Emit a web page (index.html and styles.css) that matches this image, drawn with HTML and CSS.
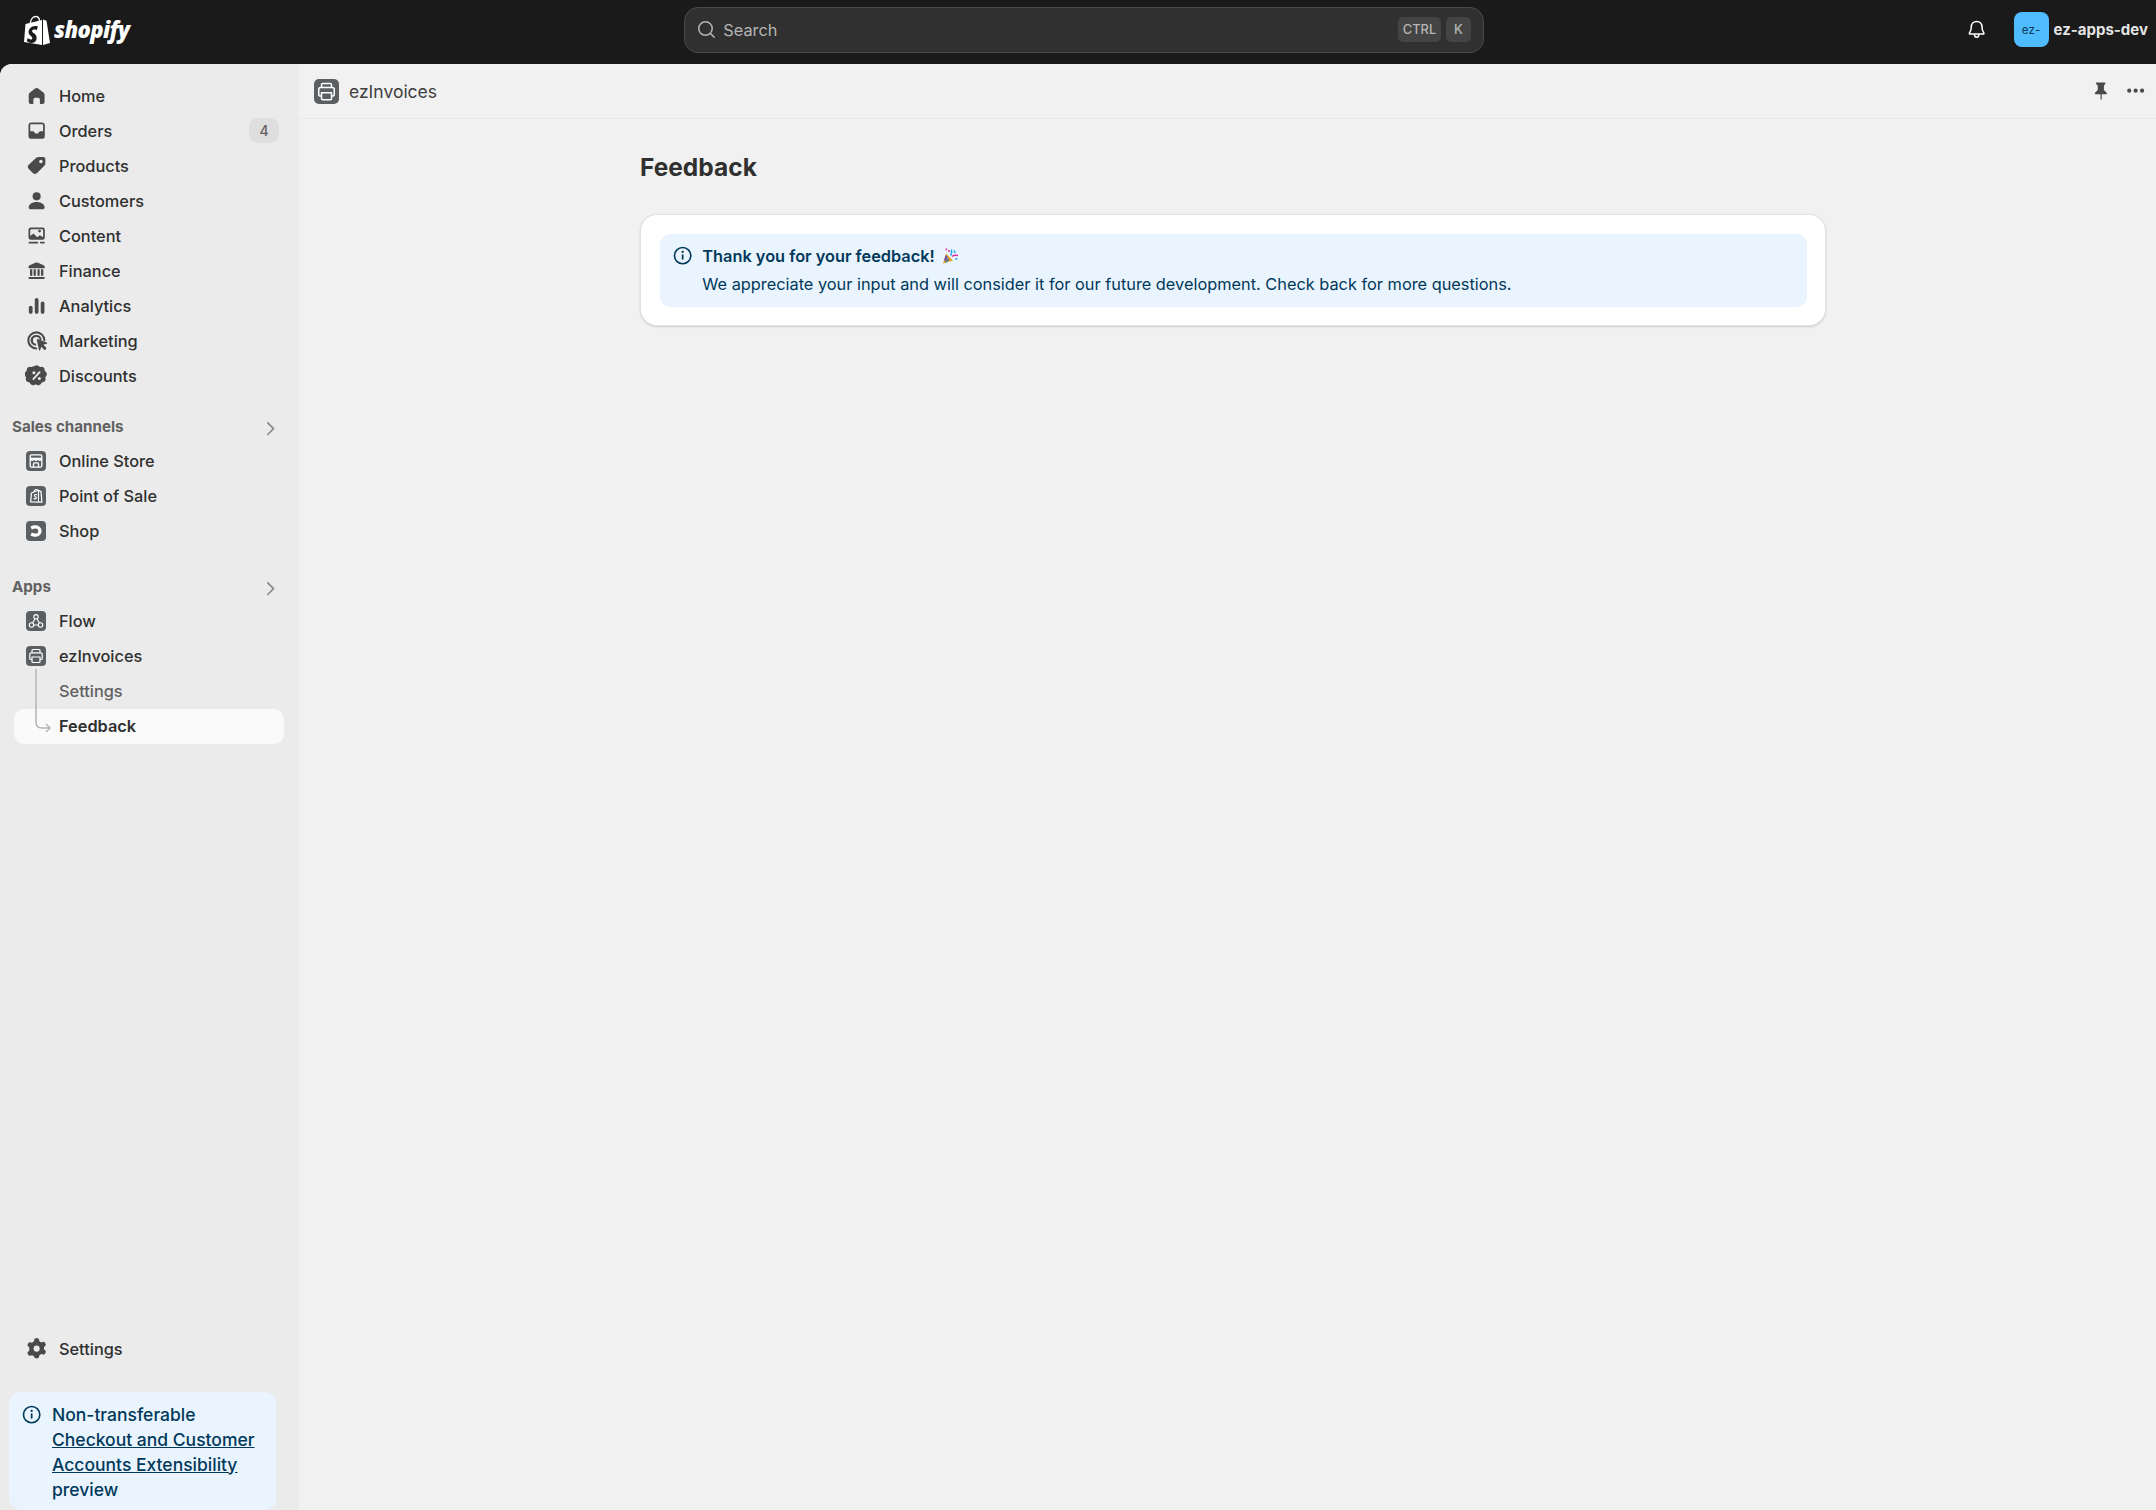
FILE: index.html

```html
<!DOCTYPE html>
<html lang="en">
<head>
  <meta charset="UTF-8" />
  <title>Feedback ~ ezInvoices ~ Shopify</title>
  <link rel="stylesheet" href="styles.css">
</head>
<body>
  <svg class="sprite" xmlns="http://www.w3.org/2000/svg">
    <symbol id="i-home" viewBox="0 0 20 20"><path d="M3.200 9.300c0-.7.300-1.300.8-1.800l4.400-3.500a2.500 2.500 0 0 1 3.200 0l4.400 3.500c.5.500.8 1.100.8 1.800v6.100a1.800 1.800 0 0 1-1.800 1.800H12.800v-3.700a1.800 1.800 0 0 0-1.800-1.800H9a1.800 1.800 0 0 0-1.800 1.800v3.700H5a1.800 1.800 0 0 1-1.800-1.800z"/></symbol>
    <symbol id="i-orders" viewBox="0 0 20 20"><path d="M5.500 3h9A2.500 2.500 0 0 1 17 5.500v9a2.500 2.500 0 0 1-2.500 2.500h-9A2.500 2.500 0 0 1 3 14.500v-9A2.500 2.500 0 0 1 5.500 3z"/><path d="M4.500 5.300c0-.5.400-.8.800-.8h9.400c.4 0 .8.300.8.800v5.200h-2.300c-.6 0-1 .3-1.300.8l-.4.700c-.2.300-.5.500-.9.500H9.400c-.4 0-.7-.2-.9-.5l-.4-.7c-.3-.5-.7-.8-1.300-.8H4.500z" fill="#ebebeb"/></symbol>
    <symbol id="i-tag" viewBox="1 1 18 18"><path fill-rule="evenodd" d="M11.700 3.300h3.400c.9 0 1.600.7 1.600 1.600v3.400c0 .7-.3 1.300-.8 1.800l-5.600 5.600a2.300 2.300 0 0 1-3.200 0l-3.200-3.200a2.300 2.300 0 0 1 0-3.200L9.500 4c.6-.5 1.400-.7 2.200-.7zM13.300 8.200a1.400 1.400 0 1 0 0-2.800 1.400 1.400 0 0 0 0 2.800z"/></symbol>
    <symbol id="i-person" viewBox="0.500 0.500 19 19"><circle cx="10" cy="6.500" r="3.300"/><path d="M10 11.200c3.400 0 6.500 1.800 6.500 4.300 0 .9-.7 1.500-1.600 1.500H5.100c-.9 0-1.600-.6-1.600-1.500 0-2.500 3.100-4.300 6.500-4.300z"/></symbol>
    <symbol id="i-content" viewBox="0 0 20 20"><path fill-rule="evenodd" d="M5 3h10a2 2 0 0 1 2 2v6.500a2 2 0 0 1-2 2H5a2 2 0 0 1-2-2V5a2 2 0 0 1 2-2zM4.500 10.300l2.700-2.200 3.300 3.200 2.300-1.600 2.700 1.600V5.300c0-.5-.3-.8-.8-.8H5.300c-.5 0-.8.300-.8.800zm8-3a1.200 1.200 0 1 0 0-2.400 1.200 1.200 0 0 0 0 2.400z"/><rect x="3" y="15.300" width="8.400" height="1.500" rx=".7"/><rect x="12.800" y="15.300" width="4.200" height="1.500" rx=".7"/></symbol>
    <symbol id="i-bank" viewBox="0 0 20 20"><path d="M8.800 3.200a2.700 2.700 0 0 1 2.400 0l4.800 2.200c.6.300 1 .8 1 1.400v.4c0 .4-.3.700-.7.700H3.700c-.4 0-.7-.3-.7-.7v-.4c0-.6.400-1.100 1-1.400zM4.300 8.800h2v5.500h-2zM7.400 8.800h1.900v5.500H7.400zM10.700 8.800h1.900v5.500h-1.900zM13.700 8.800h2v5.500h-2zM3.700 15.400h12.600c.4 0 .7.300.7.700v.3c0 .4-.3.700-.7.700H3.700c-.4 0-.7-.3-.7-.7v-.3c0-.4.300-.7.700-.7z"/></symbol>
    <symbol id="i-chart" viewBox="0 0 20 20"><rect x="3.300" y="10" width="3.200" height="7" rx="1.600"/><rect x="8.400" y="3.500" width="3.200" height="13.500" rx="1.600"/><rect x="13.500" y="6.500" width="3.200" height="10.500" rx="1.600"/></symbol>
    <symbol id="i-target" viewBox="1.200 1.200 18 18"><path d="M10 3a7 7 0 0 1 7 6.800.8.800 0 0 1-1.600 0A5.400 5.400 0 1 0 9.900 15.400a.8.800 0 0 1 0 1.600A7 7 0 0 1 10 3z"/><path d="M10 5.900a4.100 4.100 0 0 1 4 3.400.8.800 0 0 1-1.500.3 2.600 2.600 0 1 0-3 3 .8.800 0 0 1-.3 1.500 4.100 4.100 0 0 1 .8-8.200z"/><path d="M10.300 9.500c-.1-.4.300-.8.700-.6l7 2.700c.4.200.4.800 0 .9l-2.600.9 2.200 2.200c.2.300.2.600 0 .8l-.8.800c-.2.200-.6.200-.8 0l-2.200-2.200-.9 2.600c-.1.400-.7.400-.9 0z"/></symbol>
    <symbol id="i-discount" viewBox="1.500 1.500 17 17"><path fill-rule="evenodd" d="M8.500 3c.9-.7 2.100-.7 3 0l.9.7 1.100-.1c1.100-.1 2.100.7 2.300 1.800l.1 1.100.9.800c.8.800.9 2 .2 2.900l-.7.900.2 1.100c.2 1.100-.5 2.200-1.600 2.500l-1.100.3-.6 1c-.6 1-1.800 1.300-2.900.8l-1-.5-1 .5c-1.100.5-2.300.2-2.900-.8l-.6-1-1.100-.3c-1.100-.3-1.800-1.400-1.600-2.500l.2-1.100-.7-.9c-.7-.9-.6-2.100.2-2.900l.9-.8.1-1.100c.2-1.100 1.200-1.900 2.300-1.800l1.100.1zM12.600 7a.7.700 0 0 0-1 0l-4.500 5a.7.700 0 0 0 1.100.9l4.500-5c.200-.3.200-.7-.1-.9zM8 9a1.100 1.100 0 1 0 0-2.200A1.100 1.100 0 0 0 8 9zm4 4.200a1.100 1.100 0 1 0 0-2.200 1.100 1.100 0 0 0 0 2.200z"/></symbol>
    <symbol id="i-gear" viewBox="1.600 1.600 16.800 16.800"><path fill-rule="evenodd" d="M8.400 3.200c.1-.4.500-.7 1-.7h1.200c.5 0 .9.300 1 .7l.4 1.500 1.300.8 1.500-.4c.4-.1.900.1 1.100.5l.6 1c.2.400.2.900-.1 1.200l-1.100 1.100v1.600l1.100 1.100c.3.300.3.800.1 1.200l-.6 1c-.2.400-.7.600-1.100.5l-1.500-.4-1.300.8-.4 1.500c-.1.400-.5.700-1 .7H9.400c-.5 0-.9-.3-1-.7L8 15.500l-1.300-.8-1.500.4c-.4.100-.9-.1-1.100-.5l-.6-1c-.2-.4-.2-.9.100-1.200l1.100-1.100V9.200L3.600 8.100c-.3-.3-.3-.8-.1-1.200l.6-1c.2-.4.7-.6 1.100-.5l1.500.4L8 4.700zM10 12.200a2.200 2.200 0 1 0 0-4.400 2.200 2.200 0 0 0 0 4.400z"/></symbol>
    <symbol id="i-info" viewBox="0 0 20 20"><circle cx="10" cy="10" r="7" fill="none" stroke="currentColor" stroke-width="1.400"/><circle cx="10" cy="6.700" r="1" fill="currentColor"/><rect x="9.250" y="8.800" width="1.500" height="4.800" rx=".7" fill="currentColor"/></symbol>
    <symbol id="i-chevron" viewBox="0 0 20 20"><path d="M7.500 5l5 5-5 5" fill="none" stroke="currentColor" stroke-width="1.400" stroke-linecap="round" stroke-linejoin="round"/></symbol>
    <symbol id="t-store" viewBox="0 0 20 20"><rect width="20" height="20" rx="4" fill="#5c5f62"/><g fill="none" stroke="#fff" stroke-width="1.300" stroke-linejoin="round"><rect x="4.200" y="3.800" width="11.600" height="12.400" rx="1.500"/><path d="M4.200 8.200c1 1.400 2.800 1.400 3.900 0 1 1.400 2.800 1.400 3.800 0 1.100 1.400 2.900 1.400 3.900 0M4.200 7.500h11.600M7.500 16.200v-3.300c0-.6.400-1 1-1h3c.6 0 1 .4 1 1v3.300"/></g></symbol>
    <symbol id="t-pos" viewBox="0 0 20 20"><rect width="20" height="20" rx="4" fill="#5c5f62"/><path d="M5.400 7l6.900-2.700 2.700 1.300.9 10.600-11.200-.2z" fill="none" stroke="#fff" stroke-width="1.200" stroke-linejoin="round"/><path d="M8 5.800c.3-2.400 3-3.200 4-1.200M12.500 4.500v11.600" fill="none" stroke="#fff" stroke-width="1.100"/><path d="M10.700 8.700c-1.200-.5-2.300 0-2.200 1 .1 1 1.900 1 1.900 2.100 0 1-1.100 1.300-2.300.8" fill="none" stroke="#fff" stroke-width="1.200" stroke-linecap="round"/></symbol>
    <symbol id="t-shop" viewBox="0 0 20 20"><rect width="20" height="20" rx="4" fill="#5c5f62"/><path d="M4.500 5.500c1.500-1 3-1.300 5.300-1.300a5.800 5.800 0 0 1 0 11.600c-2 0-3.800-.5-5.300-1.400l1.300-2.800c1.200.6 2.600 1 3.900 1a2.600 2.600 0 0 0 0-5.200c-1.300 0-2.700.3-3.900 1z" fill="#fff"/></symbol>
    <symbol id="t-flow" viewBox="0 0 20 20"><rect width="20" height="20" rx="4" fill="#5c5f62"/><g fill="none" stroke="#fff" stroke-width="1.100"><circle cx="10" cy="5.800" r="2.200"/><circle cx="5.500" cy="14" r="2.200"/><circle cx="14.500" cy="14" r="2.200"/><path d="M9 8l-2.400 3.900M11 8l2.400 3.900M7.800 14h4.400"/></g></symbol>
    <symbol id="t-printer" viewBox="0 0 20 20"><rect width="20" height="20" rx="4" fill="#5c5f62"/><g fill="none" stroke="#fff" stroke-width="1.200" stroke-linejoin="round"><path d="M6 6.800V4.500c0-.6.400-1 1-1h6c.6 0 1 .4 1 1v2.300"/><path d="M6 13.500H4.800c-.6 0-1-.4-1-1V8.300c0-.8.600-1.500 1.500-1.500h9.400c.9 0 1.500.7 1.500 1.500v4.200c0 .6-.4 1-1 1H14"/><path d="M6 11h8v4.500c0 .6-.4 1-1 1H7c-.6 0-1-.4-1-1z"/></g></symbol>
  </svg>

  <header class="topbar">
    <div class="brand">
      <svg class="brand-bag" viewBox="0 0 26 30"><path d="M1.500 9L18 5v25L0 27z" fill="#fff"/><path d="M19 4.500l3.500 1.300L26 28l-7 2z" fill="#fff"/><path d="M6.300 8c.5-4 3-6.800 5.700-6.500 2.500.2 3.500 2 3.600 5" fill="none" stroke="#fff" stroke-width="1.300"/><path d="M14 11.300l-1.300 3.900s-1.100-.6-2.500-.6c-2 0-2.100 1.300-2.100 1.600 0 1.700 4.500 2.400 4.500 6.500 0 3.200-2 5.200-4.800 5.200-3.300 0-5-2-5-2l.9-2.900s1.700 1.500 3.200 1.500c1 0 1.400-.8 1.400-1.300 0-2.300-3.700-2.400-3.700-6.100 0-3.100 2.300-6.200 6.800-6.200 1.700 0 2.600.5 2.600.5z" fill="#1a1a1a"/></svg>
      <span class="brand-name">shopify</span>
    </div>
    <div class="search">
      <svg class="search-icon" viewBox="0 0 20 20"><circle cx="9" cy="9" r="5.800" fill="none" stroke="currentColor" stroke-width="1.300"/><path d="M13.300 13.300l3.200 3.200" stroke="currentColor" stroke-width="1.300" stroke-linecap="round"/></svg>
      <span class="search-text">Search</span>
      <kbd class="key key-ctrl">CTRL</kbd>
      <kbd class="key key-k">K</kbd>
    </div>
    <div class="account">
      <svg class="bell" viewBox="0 0 20 20"><path d="M10 3c-2.800 0-4.600 2.100-4.600 4.800 0 2.600-.5 3.700-1.500 4.900-.4.500-.1 1.100.5 1.100h11.200c.6 0 .9-.6.500-1.100-1-1.200-1.500-2.300-1.500-4.900C14.600 5.100 12.800 3 10 3z" fill="none" stroke="currentColor" stroke-width="1.300" stroke-linejoin="round"/><path d="M8.200 13.800v.9a1.800 1.800 0 0 0 3.600 0v-.9" fill="none" stroke="currentColor" stroke-width="1.300"/></svg>
      <span class="avatar">ez-</span>
      <span class="store-name">ez-apps-dev</span>
    </div>
  </header>

  <div class="frame">
    <aside class="sidebar">
      <nav class="nav-main">
        <a class="nav-item"><svg class="icon"><use href="#i-home"/></svg>Home</a>
        <a class="nav-item"><svg class="icon"><use href="#i-orders"/></svg>Orders<span class="count">4</span></a>
        <a class="nav-item"><svg class="icon"><use href="#i-tag"/></svg>Products</a>
        <a class="nav-item"><svg class="icon"><use href="#i-person"/></svg>Customers</a>
        <a class="nav-item"><svg class="icon"><use href="#i-content"/></svg>Content</a>
        <a class="nav-item"><svg class="icon"><use href="#i-bank"/></svg>Finance</a>
        <a class="nav-item"><svg class="icon"><use href="#i-chart"/></svg>Analytics</a>
        <a class="nav-item"><svg class="icon"><use href="#i-target"/></svg>Marketing</a>
        <a class="nav-item"><svg class="icon"><use href="#i-discount"/></svg>Discounts</a>
      </nav>

      <div class="nav-section">
        <div class="section-title">Sales channels<svg class="chevron"><use href="#i-chevron"/></svg></div>
        <a class="nav-item"><svg class="tile"><use href="#t-store"/></svg>Online Store</a>
        <a class="nav-item"><svg class="tile"><use href="#t-pos"/></svg>Point of Sale</a>
        <a class="nav-item"><svg class="tile"><use href="#t-shop"/></svg>Shop</a>
      </div>

      <div class="nav-section">
        <div class="section-title">Apps<svg class="chevron"><use href="#i-chevron"/></svg></div>
        <a class="nav-item"><svg class="tile"><use href="#t-flow"/></svg>Flow</a>
        <a class="nav-item"><svg class="tile"><use href="#t-printer"/></svg>ezInvoices</a>
        <div class="subnav">
          <a class="nav-item sub">Settings</a>
          <a class="nav-item sub active">Feedback</a>
          <svg class="connector" viewBox="0 0 16 66"><path d="M1 0v53c0 4 2 6 6 6h8M11 55l4 4-4 4" fill="none" stroke="#b5b5b5" stroke-width="1.500"/></svg>
        </div>
      </div>

      <div class="sidebar-foot">
        <a class="nav-item"><svg class="icon"><use href="#i-gear"/></svg>Settings</a>
        <div class="preview-note">
          <svg class="info"><use href="#i-info"/></svg>
          <p>Non-transferable <a href="#">Checkout and Customer Accounts Extensibility</a> preview</p>
        </div>
      </div>
    </aside>

    <main class="main">
      <div class="app-bar">
        <svg class="app-icon"><use href="#t-printer"/></svg>
        <span class="app-name">ezInvoices</span>
        <svg class="pin" viewBox="0 0 20 20"><path d="M6.500 3h7c.5 0 .8.600.5 1l-1.200 1.700v3.800l2.400 2.200c.5.500.2 1.300-.5 1.300h-3.800v4.200c0 .8-1 .8-1 0V13H5.700c-.7 0-1-.8-.5-1.300l2.300-2.200V5.700L6 4c-.3-.4 0-1 .5-1z"/></svg>
        <svg class="dots" viewBox="0 0 20 20"><circle cx="4.500" cy="10" r="1.800"/><circle cx="10" cy="10" r="1.800"/><circle cx="15.500" cy="10" r="1.800"/></svg>
      </div>
      <div class="page">
        <h1>Feedback</h1>
        <section class="card">
          <div class="banner">
            <svg class="info"><use href="#i-info"/></svg>
            <div>
              <h2>Thank you for your feedback!
                <svg class="party" viewBox="0 0 16 16"><path d="M1 15.500l3-10 7 7z" fill="#e0a11f"/><path d="M2.200 12l1.600-5 1.700 1.700-1.900 4.800z" fill="#6a48c0"/><path d="M5 14.300l-1.500.5 2-4.800 1.600 1.600z" fill="#2f7fc4"/><circle cx="7" cy="3" r="1.100" fill="#e0309a"/><rect x="3.500" y=".5" width="1.700" height="1.700" fill="#e0309a"/><path d="M8.500 7.500c1.500-2 1.500-3.500 1-6" fill="none" stroke="#19a5ee" stroke-width="1.500"/><path d="M10 8.500c2-1.700 3-1.700 6-1" fill="none" stroke="#e0309a" stroke-width="1.500"/><path d="M12 2.500l1.200 2.500" stroke="#19a5ee" stroke-width="1.500"/><rect x="13.500" y="10" width="1.800" height="1.800" fill="#19a5ee"/></svg>
              </h2>
              <p>We appreciate your input and will consider it for our future development. Check back for more questions.</p>
            </div>
          </div>
        </section>
      </div>
    </main>
  </div>
</body>
</html>
```

FILE: styles.css

```css
* { box-sizing: border-box; }
html, body { height: 100%; }
body { margin: 0; height: 100vh; overflow: hidden; display: flex; flex-direction: column; background: #1a1a1a; color: #303030; font-family: Inter, "Liberation Sans", sans-serif; font-size: 16.33px; }
a { color: inherit; text-decoration: none; }
p, h1, h2 { margin: 0; }
.sprite { display: none; }

.topbar { flex: 0 0 64px; display: flex; align-items: center; padding-bottom: 5px; color: #e3e3e3; }
.brand { width: 684px; display: flex; align-items: center; gap: 4px; padding-left: 24px; }
.brand-bag { width: 26px; height: 30px; }
.brand-name { margin-top: -2px; color: #fff; font-family: "Open Sans", sans-serif; font-style: italic; font-weight: 800; font-size: 22px; letter-spacing: -0.6px; line-height: 30px; }
.search { width: 800px; height: 46px; display: flex; align-items: center; padding: 0 12px 0 10px; background: #303030; border: 1px solid #4a4a4a; border-radius: 14px; color: #b5b5b5; }
.search-icon { width: 23.3px; height: 23.3px; margin-right: 5px; }
.search-text { flex: 1; font-size: 16.33px; }
.key { height: 25px; display: flex; align-items: center; justify-content: center; background: #444; border-radius: 5px; font-family: Inter, sans-serif; font-size: 12.8px; font-weight: 500; color: #b5b5b5; }
.key-ctrl { width: 43px; }
.key-k { width: 25px; margin-left: 5px; }
.account { flex: 1; display: flex; align-items: center; justify-content: flex-end; padding-right: 8px; }
.bell { width: 23.3px; height: 23.3px; margin-right: 25px; color: #fff; }
.avatar { width: 35px; height: 35px; margin-right: 5px; display: flex; align-items: center; justify-content: center; background: #4fbcff; border-radius: 8px; color: #0b3a57; font-size: 11.7px; }
.store-name { font-size: 15px; font-weight: 650; color: #e3e3e3; }

.frame { flex: 1; min-height: 0; display: flex; background: #f1f1f1; border-top-left-radius: 12px; overflow: hidden; }

.sidebar { flex: 0 0 299px; display: flex; flex-direction: column; padding: 14px 15px 0 14px; background: #ebebeb; }
.nav-item { height: 35px; display: flex; align-items: center; gap: 10.4px; padding-left: 11.3px; border-radius: 10px; font-size: 16.33px; font-weight: 500; color: #303030; }
.icon { width: 23.3px; height: 23.3px; flex: none; fill: #4a4a4a; }
.tile { width: 20px; height: 20px; flex: none; margin: 0 2.1px 0 1.2px; }
.count { margin-left: auto; margin-right: 5px; width: 30px; height: 25px; display: flex; align-items: center; justify-content: center; background: #dedede; border-radius: 9px; font-size: 14px; color: #616161; }
.nav-section { margin-top: 16.5px; }
.nav-section + .nav-section { margin-top: 21px; }
.section-title { height: 34px; display: flex; align-items: center; justify-content: space-between; padding-right: 1.3px; margin-left: -2px; font-size: 15.17px; font-weight: 650; color: #616161; }
.chevron { width: 23.3px; height: 23.3px; margin-top: 4px; color: #8a8a8a; }
.subnav { position: relative; }
.nav-item.sub { padding-left: 45px; color: #616161; }
.nav-item.active { background: #fafafa; color: #303030; font-weight: 600; }
.connector { position: absolute; left: 21px; top: -5px; width: 16px; height: 66px; }
.sidebar-foot { margin-top: auto; }
.preview-note { height: 118px; display: flex; gap: 8.4px; margin: 26px 8px 0 -5px; padding: 9.5px 8px 0 11.3px; background: #eaf4ff; border-radius: 12px; color: #00395a; font-size: 17.5px; font-weight: 500; line-height: 25px; }
.preview-note a { text-decoration: underline; }
.preview-note .info { margin-top: 1px; }
.info { width: 23.3px; height: 23.3px; flex: none; color: #00395a; }

.main { flex: 1; min-width: 0; }
.app-bar { height: 55px; display: flex; align-items: center; padding: 0 9px 0 15px; border-bottom: 1px solid #e8e8e8; }
.app-icon { width: 25px; height: 25px; }
.app-name { flex: 1; margin-left: 10px; font-size: 17.5px; color: #3f3f3f; }
.pin { width: 23.3px; height: 23.3px; margin-right: 11px; fill: #4a4a4a; }
.dots { width: 23.3px; height: 23.3px; fill: #4a4a4a; }
.page { width: 1184px; margin-left: 342px; padding-top: 30px; }
.page h1 { margin-left: -1px; font-size: 24.5px; font-weight: 650; line-height: 36px; color: #303030; }
.card { margin-top: 30px; padding: 19px 18px 18px 19px; background: #fff; border-radius: 16px; box-shadow: 0 0 0 1px #e3e3e3, 0 1px 2px 1px rgba(0,0,0,.15); }
.banner { display: flex; gap: 8px; padding: 8px 14px 9px 11px; background: #eaf4ff; border-radius: 10px; color: #00395a; font-size: 16.33px; line-height: 28px; }
.banner .info { margin-top: 2px; }
.banner h2 { font-size: 16.33px; font-weight: 600; line-height: 28px; }
.party { width: 16px; height: 16px; margin-left: 3px; vertical-align: -2px; }
```
